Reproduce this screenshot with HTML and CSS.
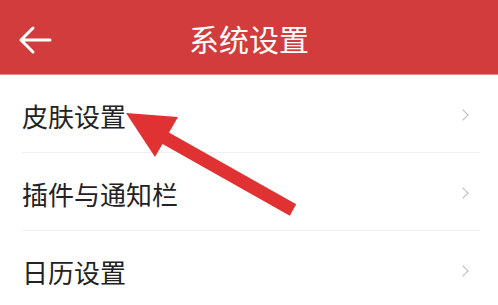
FILE: index.html
```html
<!DOCTYPE html>
<html lang="zh">
<head>
<meta charset="utf-8">
<link rel="stylesheet" href="styles.css">
</head>
<body>
<div class="page">
  <header class="bar">
    <svg class="back" width="34" height="30" viewBox="0 0 34 30"><path d="M32 15H3M15 3L3 15l12 12" fill="none" stroke="#fff" stroke-width="3" stroke-linecap="round" stroke-linejoin="round"/></svg>
    <h1 class="title">系统设置</h1>
  </header>
  <ul class="list">
    <li class="row"><span class="label">皮肤设置</span><span class="chev"></span></li>
    <li class="row"><span class="label">插件与通知栏</span><span class="chev"></span></li>
    <li class="row"><span class="label">日历设置</span><span class="chev"></span></li>
  </ul>
  <svg class="mark" width="498" height="305" viewBox="0 0 498 305">
    <line x1="293" y1="210" x2="160" y2="135" stroke="#e03232" stroke-width="13"/>
    <polygon points="126,113 178,117 155,157" fill="#e03232"/>
  </svg>
</div>
</body>
</html>
```
FILE: styles.css
```css
* { box-sizing: border-box; }
html, body { margin: 0; padding: 0; background: #fff; }
body { font-family: "Noto Sans CJK SC", "Noto Sans", sans-serif; overflow: hidden; }
.page { position: relative; width: 498px; height: 305px; overflow: hidden; }
.bar {
  height: 75px;
  background: #d33c3c;
  border-bottom: 1px solid #e58a86;
  display: flex;
  align-items: center;
  justify-content: center;
  position: relative;
}
.back { position: absolute; left: 18px; top: 25px; }
.title { margin: 0; color: #fff; font-size: 30px; font-weight: 400; line-height: 1; margin-top: 2px; }
.list { list-style: none; margin: 0; padding: 0; }
.row {
  height: 78px;
  margin: 0 18px 0 22px;
  border-bottom: 1px solid #efefef;
  display: flex;
  align-items: center;
  justify-content: space-between;
}
.label { font-size: 26px; color: #222; line-height: 1; padding-top: 4px; }
.chev {
  width: 8px; height: 8px;
  border-top: 1.5px solid #bbb;
  border-right: 1.5px solid #bbb;
  transform: rotate(45deg);
  margin-right: 13px;
  margin-top: 2px;
}
.mark { position: absolute; left: 0; top: 0; pointer-events: none; }
```
